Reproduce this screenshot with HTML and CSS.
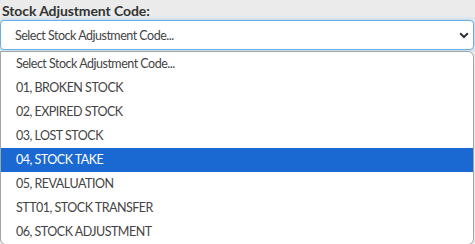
FILE: index.html
```html
<!doctype html>
<html lang="en">

<head>
    <meta charset="utf-8">
    <title>Stock Adjustment</title>
    <link rel="stylesheet" href="styles.css">
</head>

<body>
    <div class="felt">
        <label class="etikett">Stock Adjustment Code:</label>
        <div class="velger">
            <span>Select Stock Adjustment Code...</span>
            <svg class="pil" width="10" height="7" viewBox="0 0 10 7">
                <path d="M1.2 1.3 L5 5 L8.8 1.3" fill="none" stroke="#333" stroke-width="2"/>
            </svg>
        </div>
        <ul class="liste">
            <li>Select Stock Adjustment Code...</li>
            <li>01, BROKEN STOCK</li>
            <li>02, EXPIRED STOCK</li>
            <li>03, LOST STOCK</li>
            <li class="valgt">04, STOCK TAKE</li>
            <li>05, REVALUATION</li>
            <li>STT01, STOCK TRANSFER</li>
            <li>06, STOCK ADJUSTMENT</li>
        </ul>
    </div>
</body>

</html>
```

FILE: styles.css
```css
body {
    margin: 0;
    background-color: rgb(235, 235, 235);
    font-family: Lato, "Open Sans", Arial, sans-serif;
    height: 244px;
    overflow: hidden;
}

.felt {
    padding-top: 1px;
}

.etikett {
    display: block;
    font-weight: bold;
    font-size: 14px;
    letter-spacing: -0.1px;
    color: rgb(51, 51, 51);
    margin-left: 2px;
    height: 19px;
    line-height: 19px;
}

.velger {
    height: 28px;
    border: 1px solid rgb(102, 175, 233);
    border-radius: 4px;
    background-color: white;
    box-shadow: 0 0 4px rgba(102, 175, 233, 0.5);
    display: flex;
    align-items: center;
    justify-content: space-between;
    padding: 0 4px 0 14px;
    font-size: 12.5px;
    letter-spacing: -0.5px;
    color: rgb(68, 68, 68);
    margin-right: 1px;
}

.liste {
    list-style: none;
    margin: 1px 1px 0 0;
    padding: 0;
    background-color: white;
    border: 1px solid rgb(160, 165, 170);
    border-radius: 0 6px 6px 6px;
    font-size: 12.5px;
    letter-spacing: -0.5px;
    color: rgb(68, 68, 68);
}

.liste li {
    height: 24px;
    line-height: 24px;
    padding-left: 15px;
}

.liste li.valgt {
    background-color: rgb(26, 104, 209);
    color: white;
}
```
